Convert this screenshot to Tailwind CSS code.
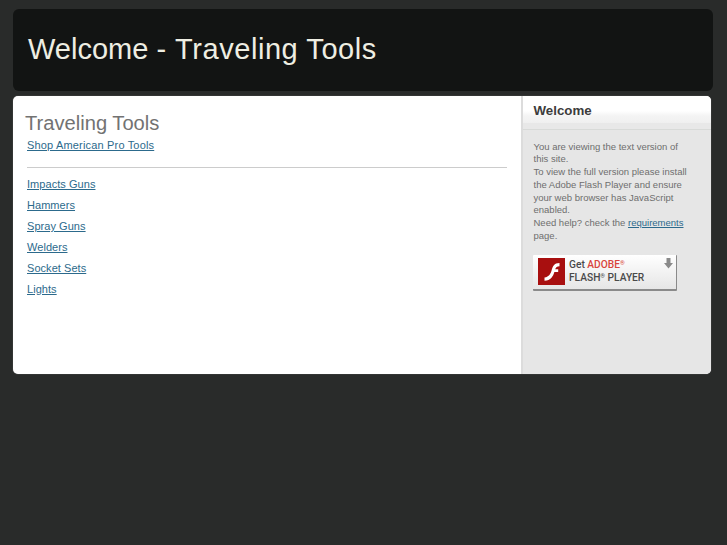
<!DOCTYPE html>
<html>
<head>
<meta charset="utf-8">
<script src="https://cdn.jsdelivr.net/npm/@tailwindcss/browser@4"></script>
</head>
<body class="m-0 h-[545px] w-[727px] overflow-hidden bg-[#292b2a] font-['Liberation_Sans',Arial,sans-serif]">
<div class="flex flex-col pt-[9px] pl-[13px]">
  <header class="flex h-[82px] w-[700px] items-center rounded-[6px] bg-[#121413] pb-[2px] pl-[15px]">
    <h1 class="text-[29px] leading-none font-normal whitespace-nowrap text-[#eeeee2]">Welcome - <span class="ml-[1px] tracking-[0.55px]">Traveling Tools</span></h1>
  </header>
  <main class="mt-[5px] flex h-[278px] w-[698px] overflow-hidden rounded-[5px] bg-white shadow-[0_0_1px_#999999]">
    <section class="w-[508px] pt-[16px] pl-[12px] pr-[3px]">
      <h2 class="text-[20.15px] leading-[22px] font-normal text-[#727272]">Traveling Tools</h2>
      <a href="#" class="mt-[4px] ml-[2px] block w-max text-[11px] leading-[14px] tracking-[0.17px] text-[#2c6a8c] underline">Shop American Pro Tools</a>
      <hr class="mt-[15px] mb-[9px] ml-[2px] w-[480px] border-t border-[#cccccc]">
      <ul class="ml-[2px] flex flex-col gap-[7px] text-[11px] leading-[14px] tracking-[0.05px] text-[#2c6a8c] underline">
        <li><a href="#">Impacts Guns</a></li>
        <li><a href="#">Hammers</a></li>
        <li><a href="#">Spray Guns</a></li>
        <li><a href="#">Welders</a></li>
        <li><a href="#">Socket Sets</a></li>
        <li><a href="#">Lights</a></li>
      </ul>
    </section>
    <aside class="flex-1 border-l-2 border-[#dcdcdc] bg-[#e6e6e6]">
      <div class="h-[34px] border-b border-[#d8dad8] bg-[linear-gradient(#ffffff_0%,#ffffff_45%,#f4f4f4_60%,#f0f0f0_80%,#e8e8e8_83%,#e8e8e8_100%)] pl-[10.5px] pt-[7px]">
        <h3 class="text-[13.3px] leading-[16px] font-bold text-[#3c3c3c]">Welcome</h3>
      </div>
      <p class="mt-[10.5px] w-[166px] pl-[10.5px] text-[9.5px] leading-[12.75px] text-[#6e6e6e]">You are viewing the text version of this site.<br>To view the full version please install the Adobe Flash Player and ensure your web browser has JavaScript enabled.<br>Need help? check the <a href="#" class="text-[#2c6a8c] underline">requirements</a> page.</p>
      <div class="relative mt-[12px] ml-[10px] flex h-[36px] w-[144px] items-center rounded-[1px] border-r border-b-2 border-[#8a8a8a] bg-gradient-to-b from-white to-[#e6e6e6] pl-[5px]">
        <svg width="27" height="27" viewBox="0 0 27 27" class="shrink-0">
          <rect width="27" height="27" fill="#a80f0f"/>
          <path d="M21.500 5c-5.500 0-6.800 3.500-7.800 7-1.100 3.800-2.500 6.800-7.200 7.500v3.300c6.300-.3 8.600-4.500 9.900-8.800h3.800v-2.700h-3c.6-1.700 1.900-3 4.300-3z" fill="#fff"/>
        </svg>
        <div class="ml-[4px] pb-[1px] font-['Roboto',sans-serif] text-[10.2px] leading-[13px] font-medium text-[#4a4a4a]">
          <div>Get <span class="text-[#d8453c]">ADOBE<sup class="text-[6px]">®</sup></span></div>
          <div class="whitespace-nowrap">FLASH<sup class="text-[6px]">®</sup> PLAYER</div>
        </div>
        <svg width="9" height="11" viewBox="0 0 9 11" class="absolute top-[3px] right-[3px]"><path d="M2.500 0h4v5h2.500l-4.500 5.500L0 5h2.500z" fill="#8a8a8a"/></svg>
      </div>
    </aside>
  </main>
</div>
</body>
</html>
